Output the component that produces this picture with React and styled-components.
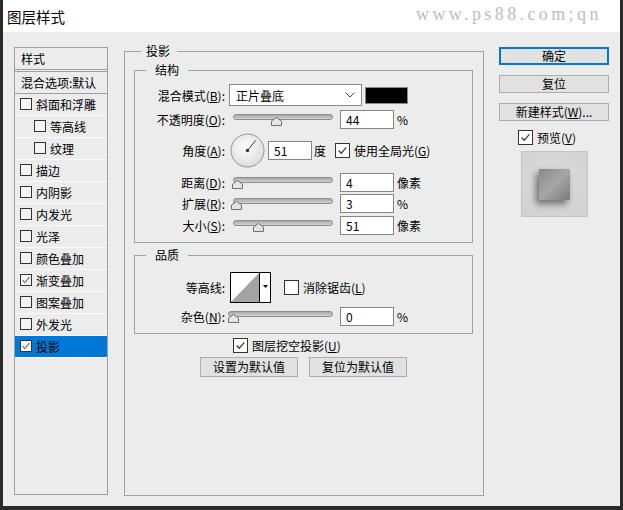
import React from "react";
import styled, { createGlobalStyle } from "styled-components";

const GlobalStyle = createGlobalStyle`
  body {
    margin: 0;
    background: #2a2a2a;
  }
  * {
    box-sizing: border-box;
  }
`;

const FONT = `"Noto Sans CJK SC", "Microsoft YaHei", sans-serif`;

export default function App() {
  return (
    <>
      <GlobalStyle />
      <Frame>
        <TitleBar>
          <Title>图层样式</Title>
          <Watermark>www.ps88.com;qn</Watermark>
        </TitleBar>
        <Body>
          <StylePanel>
            <PanelHeader>样式</PanelHeader>
            <PanelBlend>混合选项:默认</PanelBlend>
            <PanelItem label="斜面和浮雕" />
            <PanelItem label="等高线" indent />
            <PanelItem label="纹理" indent />
            <PanelItem label="描边" />
            <PanelItem label="内阴影" />
            <PanelItem label="内发光" />
            <PanelItem label="光泽" />
            <PanelItem label="颜色叠加" />
            <PanelItem label="渐变叠加" checked />
            <PanelItem label="图案叠加" />
            <PanelItem label="外发光" />
            <PanelItem label="投影" checked active />
          </StylePanel>

          <Group $w={360} $h={453} $ml={16} $pad="3px 10px 0 9px">
            <Legend $ml={7} $pl={5} $pr={7}>投影</Legend>

            <Group $w={339} $h={181}>
              <Legend $ml={11} $pl={9} $pr={9}>结构</Legend>
              <Row $h={22} $mt={6}>
                <Label>
                  混合模式(<Key>B</Key>):
                </Label>
                <Select>
                  正片叠底
                  <svg width="10" height="6" viewBox="0 0 10 6">
                    <polyline points="0.5,0.5 5,5 9.5,0.5" fill="none" stroke="#444" />
                  </svg>
                </Select>
                <Swatch />
              </Row>
              <Row $h={20} $mt={3}>
                <Label>
                  不透明度(<Key>O</Key>):
                </Label>
                <Slider at={43} />
                <Field>44</Field>
                <Suffix>%</Suffix>
              </Row>
              <Row $h={34} $mt={4}>
                <Label>
                  角度(<Key>A</Key>):
                </Label>
                <Dial />
                <Field $w={44} $ml={3}>
                  51
                </Field>
                <Suffix $ml={2}>度</Suffix>
                <Check checked $ml={9} />
                <CheckText>
                  使用全局光(<Key>G</Key>)
                </CheckText>
              </Row>
              <Row $h={21} $mt={5}>
                <Label>
                  距离(<Key>D</Key>):
                </Label>
                <Slider at={4} />
                <Field>4</Field>
                <Suffix>像素</Suffix>
              </Row>
              <Row $h={21}>
                <Label>
                  扩展(<Key>R</Key>):
                </Label>
                <Slider at={3} />
                <Field>3</Field>
                <Suffix>%</Suffix>
              </Row>
              <Row $h={21} $mt={1}>
                <Label>
                  大小(<Key>S</Key>):
                </Label>
                <Slider at={25} />
                <Field>51</Field>
                <Suffix>像素</Suffix>
              </Row>
            </Group>

            <Group $w={339} $h={87} $mt={4}>
              <Legend $ml={11} $pl={9} $pr={9}>品质</Legend>
              <Row $h={31} $mt={9}>
                <Label>等高线:</Label>
                <Contour>
                  <svg width="28" height="29" viewBox="0 0 28 29">
                    <polygon points="0,29 28,0 28,29" fill="#a3a3a3" />
                  </svg>
                  <ContourArrow>
                    <svg width="5" height="3" viewBox="0 0 5 3">
                      <polygon points="0,0 5,0 2.5,3" fill="#000" />
                    </svg>
                  </ContourArrow>
                </Contour>
                <Check $ml={13} />
                <CheckText>
                  消除锯齿(<Key>L</Key>)
                </CheckText>
              </Row>
              <Row $h={21} $mt={3}>
                <Label>
                  杂色(<Key>N</Key>):
                </Label>
                <Slider at={5} width={105} ml={3} />
                <Field>0</Field>
                <Suffix>%</Suffix>
              </Row>
            </Group>

            <Row $h={15} $mt={4} $pl={99}>
              <Check checked />
              <CheckText>
                图层挖空投影(<Key>U</Key>)
              </CheckText>
            </Row>
            <ButtonRow>
              <Button>设置为默认值</Button>
              <Button>复位为默认值</Button>
            </ButtonRow>
          </Group>

          <RightColumn>
            <ActionButton $primary>确定</ActionButton>
            <ActionButton>复位</ActionButton>
            <ActionButton>
              新建样式(<Key>W</Key>)...
            </ActionButton>
            <PreviewRow>
              <Check checked />
              <CheckText>
                预览(<Key>V</Key>)
              </CheckText>
            </PreviewRow>
            <PreviewBox>
              <PreviewSquare />
            </PreviewBox>
          </RightColumn>
        </Body>
      </Frame>
    </>
  );
}

function Tick({ color = "#444" }) {
  return (
    <TickSvg viewBox="0 0 12 12">
      <polyline points="1.8,6 4.6,9 10.2,2.6" fill="none" stroke={color} strokeWidth="1.3" />
    </TickSvg>
  );
}

function PanelItem({ label, indent, checked, active }) {
  return (
    <ItemRow $indent={indent} $active={active}>
      <ListBox>{checked && <Tick color="#6a6a6a" />}</ListBox>
      <span>{label}</span>
    </ItemRow>
  );
}

function Check({ checked, $ml }) {
  return <CheckBox $ml={$ml}>{checked && <Tick color="#3a3a3a" />}</CheckBox>;
}

function Slider({ at, width = 100, ml = 8 }) {
  return (
    <SliderWrap $w={width} $ml={ml}>
      <TrackBar />
      <Thumb $at={at} width="11" height="9" viewBox="0 0 11 9">
        <polygon
          points="0.5,4 5.5,0.5 10.5,4 10.5,8.5 0.5,8.5"
          fill="#e4e4e4"
          stroke="#6f6f6f"
        />
      </Thumb>
    </SliderWrap>
  );
}

function Dial() {
  return (
    <DialSvg width="35" height="35" viewBox="0 0 35 35">
      <defs>
        <radialGradient id="dialFill" cx="45%" cy="40%" r="65%">
          <stop offset="0" stopColor="#ffffff" />
          <stop offset="1" stopColor="#dadada" />
        </radialGradient>
      </defs>
      <circle cx="17.5" cy="17.5" r="16.5" fill="url(#dialFill)" stroke="#939393" />
      <line x1="17.5" y1="17.5" x2="25.7" y2="7.4" stroke="#3a3a3a" />
      <circle cx="17.5" cy="17.5" r="1.8" fill="#3a3a3a" />
    </DialSvg>
  );
}

const Frame = styled.div`
  width: 623px;
  height: 510px;
  padding: 0 3px 4px 3px;
  background: #2a2a2a;
  display: flex;
  flex-direction: column;
  font-family: ${FONT};
  font-size: 12px;
  color: #000;
`;

const TitleBar = styled.div`
  height: 32px;
  flex-shrink: 0;
  background: #fff;
  display: flex;
  align-items: center;
  padding-left: 4px;
  overflow: hidden;
`;

const Title = styled.div`
  font-size: 14.5px;
  line-height: 18px;
  margin-top: 1px;
`;

const Watermark = styled.div`
  margin-left: auto;
  width: 204px;
  flex-shrink: 0;
  white-space: nowrap;
  overflow: hidden;
  font-family: "Liberation Serif", serif;
  font-size: 18px;
  letter-spacing: 3.4px;
  color: #bdbdbd;
  margin-top: -3px;
`;

const Body = styled.div`
  flex: 1;
  background: #ececec;
  display: flex;
  align-items: flex-start;
  padding: 11px 0 0 11px;
`;

const StylePanel = styled.div`
  margin-top: 4px;
  width: 94px;
  height: 448px;
  border: 1px solid #a0a0a0;
  display: flex;
  flex-direction: column;
  line-height: 21px;
  white-space: nowrap;
  overflow: hidden;
`;

const PanelHeader = styled.div`
  height: 22px;
  padding-left: 6px;
  border-bottom: 1px solid #a0a0a0;
`;

const PanelBlend = styled.div`
  height: 23px;
  margin-top: 1px;
  padding-left: 6px;
  border-top: 1px solid #a0a0a0;
  border-bottom: 1px solid #a0a0a0;
`;

const ItemRow = styled.div`
  height: 22px;
  display: flex;
  align-items: center;
  gap: 4px;
  padding-left: ${(p) => (p.$indent ? 19 : 5)}px;
  padding-bottom: 1px;
  border-bottom: 1px solid #fafafa;
  background: ${(p) => (p.$active ? "#0078d7" : "transparent")};
`;

const TickSvg = styled.svg`
  display: block;
  width: 100%;
  height: 100%;
`;

const ListBox = styled.div`
  width: 12px;
  height: 12px;
  border: 1px solid #333;
  background: #f4f4f4;
  flex-shrink: 0;
`;

const Group = styled.fieldset`
  margin: ${(p) => p.$mt || 0}px 0 0 ${(p) => p.$ml || 0}px;
  padding: ${(p) => p.$pad || 0};
  width: ${(p) => p.$w}px;
  height: ${(p) => p.$h}px;
  flex-shrink: 0;
  border: 1px solid #a0a0a0;
  min-inline-size: 0;
`;

const Legend = styled.legend`
  margin-left: ${(p) => p.$ml}px;
  padding: 0 ${(p) => p.$pr}px 0 ${(p) => p.$pl}px;
  font-size: 12px;
  line-height: 16px;
`;

const Row = styled.div`
  display: flex;
  align-items: center;
  height: ${(p) => p.$h}px;
  margin-top: ${(p) => p.$mt || 0}px;
  padding-left: ${(p) => p.$pl || 0}px;
  white-space: nowrap;
`;

const Label = styled.div`
  width: 90px;
  flex-shrink: 0;
  text-align: right;
`;

const Key = styled.span`
  text-decoration: underline;
  text-underline-offset: 1px;
`;

const Select = styled.div`
  margin-left: 4px;
  width: 133px;
  height: 22px;
  border: 1px solid #8a8a8a;
  background: #fff;
  display: flex;
  align-items: center;
  justify-content: space-between;
  padding: 0 6px 0 6px;
`;

const Swatch = styled.div`
  margin-left: 3px;
  width: 43px;
  height: 17px;
  background: #000;
  border: 1px solid #8a8a8a;
`;

const SliderWrap = styled.div`
  position: relative;
  margin-left: ${(p) => p.$ml}px;
  width: ${(p) => p.$w}px;
  height: 11px;
  flex-shrink: 0;
`;

const TrackBar = styled.div`
  height: 6px;
  border-radius: 3px;
  border: 1px solid #8e8e8e;
  background: linear-gradient(#a9a9a9, #d2d2d2);
`;

const Thumb = styled.svg`
  position: absolute;
  top: 3px;
  left: ${(p) => p.$at - 5.5}px;
`;

const Field = styled.div`
  margin-left: ${(p) => (p.$ml === undefined ? 7 : p.$ml)}px;
  width: ${(p) => p.$w || 54}px;
  height: 19px;
  border: 1px solid #858585;
  background: #fff;
  padding-left: 5px;
  line-height: 17px;
  flex-shrink: 0;
`;

const Suffix = styled.span`
  margin-left: ${(p) => (p.$ml === undefined ? 3 : p.$ml)}px;
`;

const DialSvg = styled.svg`
  margin-left: 5px;
  flex-shrink: 0;
`;

const CheckBox = styled.div`
  margin-left: ${(p) => p.$ml || 0}px;
  width: 15px;
  height: 15px;
  border: 1px solid #333;
  background: #fff;
  flex-shrink: 0;
  padding: 1px;
`;

const CheckText = styled.span`
  margin-left: 4px;
`;

const Contour = styled.div`
  margin-left: 5px;
  width: 41px;
  height: 31px;
  border: 1px solid #000;
  background: #fff;
  display: flex;
  flex-shrink: 0;

  & > svg {
    display: block;
  }
`;

const ContourArrow = styled.div`
  width: 11px;
  border-left: 1px solid #000;
  display: flex;
  align-items: center;
  justify-content: center;
  padding-bottom: 2px;
`;

const ButtonRow = styled.div`
  margin-top: 4px;
  display: flex;
  justify-content: center;
  gap: 11px;
`;

const Button = styled.div`
  width: 98px;
  height: 20px;
  border: 1px solid #adadad;
  background: #e1e1e1;
  text-align: center;
  line-height: 18px;
`;

const RightColumn = styled.div`
  margin: 4px 0 0 15px;
  width: 110px;
  display: flex;
  flex-direction: column;
  gap: 10px;
`;

const ActionButton = styled.div`
  height: 18px;
  border: ${(p) => (p.$primary ? "2px solid #0078d7" : "1px solid #adadad")};
  background: #e1e1e1;
  text-align: center;
  line-height: ${(p) => (p.$primary ? 14 : 16)}px;
  white-space: nowrap;
`;

const PreviewRow = styled.div`
  height: 17px;
  margin-top: -2px;
  display: flex;
  align-items: center;
  padding-left: 19px;
`;

const PreviewBox = styled.div`
  margin-top: -5px;
  align-self: center;
  width: 67px;
  height: 66px;
  border: 1px solid #c4c4c4;
  background: radial-gradient(circle at 50% 45%, #dedede, #d0d0d0);
  display: flex;
  align-items: center;
  justify-content: center;
`;

const PreviewSquare = styled.div`
  width: 31px;
  height: 31px;
  background: linear-gradient(135deg, #8a8a8a, #a6a6a6 50%, #7a7a7a);
  box-shadow: -3px 4px 7px rgba(0, 0, 0, 0.5);
`;
